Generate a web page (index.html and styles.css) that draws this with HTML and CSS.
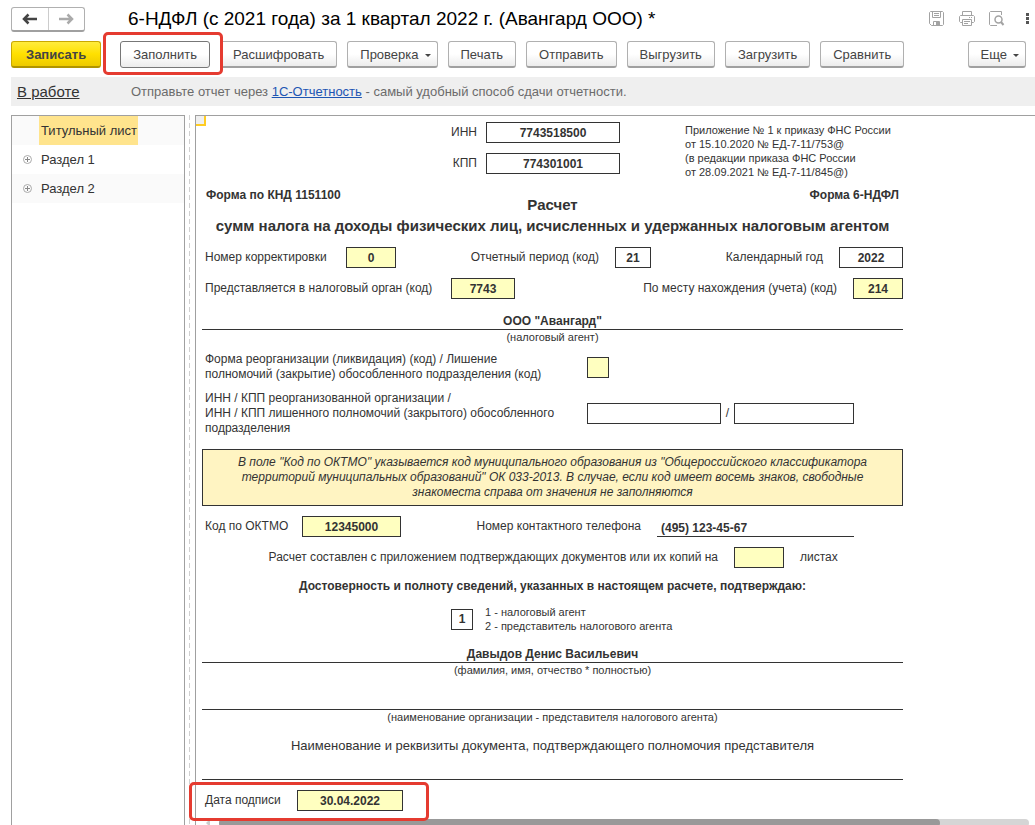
FILE: index.html
```html
<!DOCTYPE html>
<html lang="ru">
<head>
<meta charset="utf-8">
<title>6-НДФЛ</title>
<meta name="viewport" content="width=device-width, initial-scale=1">
<link rel="stylesheet" href="styles.css">
</head>
<body>
<div class="page">
  <header class="titlebar">
    <div class="history">
      <button type="button" class="history-btn" aria-label="Назад"><svg width="16" height="12" viewBox="0 0 16 12"><path d="M2 6H15M6.500 1.500L2 6L6.500 10.500" fill="none" stroke="#444" stroke-width="2.500"/></svg></button>
      <button type="button" class="history-btn" aria-label="Вперед"><svg width="16" height="12" viewBox="0 0 16 12"><path d="M1 6H14M9.500 1.500L14 6L9.500 10.500" fill="none" stroke="#aaa" stroke-width="2.500"/></svg></button>
    </div>
    <h1 class="title">6-НДФЛ (с 2021 года) за 1 квартал 2022 г. (Авангард ООО) *</h1>
    <div class="tools">
      <button type="button" class="tool" aria-label="Сохранить"><svg width="16" height="16" viewBox="0 0 16 16" fill="none" stroke="#a3a3a3"><path d="M1.500 .5H13.500L14.500 1.500V13.500L13.500 14.500H2.500L.5 12.500V1.500ZM3.500 .5V6.500H11.500V.5M5 2.500H10M5 4.500H10M4.500 14.500V10.500H10.500V14.500"/><path d="M7 11H10V14H7Z" fill="#a3a3a3" stroke="none"/></svg></button>
      <button type="button" class="tool" aria-label="Печать документа"><svg width="16" height="16" viewBox="0 0 16 16" fill="none" stroke="#a3a3a3"><path d="M3.500 4.500V.5H12.500V4.500M3.500 11.500H1.500L.5 10.500V5.500L1.500 4.500H14.500L15.500 5.500V10.500L14.500 11.500H12.500M3.500 8.500H12.500V14.500H3.500ZM5 10.500H11M5 12.500H9M10 6.500H11M12 6.500H13"/></svg></button>
      <button type="button" class="tool" aria-label="Просмотр"><svg width="16" height="16" viewBox="0 0 16 16" fill="none" stroke="#a3a3a3"><path d="M12.500 4V.5H1.500L.5 1.500V13.500L1.500 14.500H8"/><circle cx="9.500" cy="8.500" r="3.500" stroke-width="1.500"/><path d="M12 11L14.500 14" stroke-width="2"/></svg></button>
      <button type="button" class="tool tool-more" aria-label="Меню"><svg width="4" height="12" viewBox="0 0 4 12" fill="#555"><rect x="1" width="3" height="3"/><rect x="1" y="4" width="3" height="3"/><rect x="1" y="8" width="3" height="3"/></svg></button>
    </div>
  </header>

  <div class="toolbar">
    <button type="button" class="btn btn-primary">Записать</button>
    <div class="marked marked-btn"><button type="button" class="btn btn-focus">Заполнить</button></div>
    <button type="button" class="btn">Расшифровать</button>
    <button type="button" class="btn btn-menu">Проверка</button>
    <button type="button" class="btn">Печать</button>
    <button type="button" class="btn">Отправить</button>
    <button type="button" class="btn">Выгрузить</button>
    <button type="button" class="btn">Загрузить</button>
    <button type="button" class="btn">Сравнить</button>
    <button type="button" class="btn btn-menu btn-last">Еще</button>
  </div>

  <div class="status">
    <a href="#" class="state">В работе</a>
    <p class="hint">Отправьте отчет через <a href="#">1С-Отчетность</a> - самый удобный способ сдачи отчетности.</p>
  </div>

  <div class="workspace">
    <nav class="sections">
      <a href="#" class="section current"><span>Титульный лист</span></a>
      <a href="#" class="section"><svg width="9" height="9" viewBox="0 0 9 9" fill="none" stroke="#888"><circle cx="4.500" cy="4.500" r="4" stroke="#aaa"/><path d="M2 4.500H7M4.500 2V7"/></svg>Раздел 1</a>
      <a href="#" class="section"><svg width="9" height="9" viewBox="0 0 9 9" fill="none" stroke="#888"><circle cx="4.500" cy="4.500" r="4" stroke="#aaa"/><path d="M2 4.500H7M4.500 2V7"/></svg>Раздел 2</a>
    </nav>
    <div class="splitter"></div>
    <main class="sheet">
      <div class="cell-cursor"></div>
      <form class="form">
        <div class="head">
          <div class="ids">
            <label for="inn">ИНН</label><input id="inn" class="box" value="7743518500">
            <label for="kpp">КПП</label><input id="kpp" class="box" value="774301001">
          </div>
          <p class="note">Приложение № 1 к приказу ФНС России<br>от 15.10.2020 № ЕД-7-11/753@<br>(в редакции приказа ФНС России<br>от 28.09.2021 № ЕД-7-11/845@)</p>
        </div>
        <div class="codes"><span>Форма по КНД 1151100</span><span>Форма 6-НДФЛ</span></div>
        <h2 class="heading">Расчет<br>сумм налога на доходы физических лиц, исчисленных и удержанных налоговым агентом</h2>

        <div class="row row-period">
          <label for="corr">Номер корректировки</label><input id="corr" class="box fill" value="0">
          <label for="period" class="right">Отчетный период (код)</label><input id="period" class="box" value="21">
          <label for="year" class="right">Календарный год</label><input id="year" class="box" value="2022">
        </div>
        <div class="row row-office">
          <label for="office">Представляется в налоговый орган (код)</label><input id="office" class="box fill" value="7743">
          <label for="place" class="right">По месту нахождения (учета) (код)</label><input id="place" class="box fill" value="214">
        </div>

        <input id="agent" class="line" value="ООО &quot;Авангард&quot;">
        <label for="agent" class="caption">(налоговый агент)</label>

        <div class="row row-reorg">
          <label for="reorg">Форма реорганизации (ликвидация) (код) / Лишение<br>полномочий (закрытие) обособленного подразделения (код)</label><input id="reorg" class="box fill">
        </div>
        <div class="row row-former">
          <label for="finn">ИНН / КПП реорганизованной организации /<br>ИНН / КПП лишенного полномочий (закрытого) обособленного<br>подразделения</label><input id="finn" class="box"><span class="slash">/</span><input class="box" aria-label="КПП реорганизованной организации">
        </div>

        <p class="notice">В поле "Код по ОКТМО" указывается код муниципального образования из "Общероссийского классификатора территорий муниципальных образований" ОК 033-2013. В случае, если код имеет восемь знаков, свободные знакоместа справа от значения не заполняются</p>

        <div class="row row-oktmo">
          <label for="oktmo">Код по ОКТМО</label><input id="oktmo" class="box fill" value="12345000">
          <label for="phone" class="right">Номер контактного телефона</label><input id="phone" class="line phone" value="(495) 123-45-67">
        </div>
        <div class="row row-copies">
          <label for="copies" class="right">Расчет составлен с приложением подтверждающих документов или их копий на</label><input id="copies" class="box fill"><span>листах</span>
        </div>

        <p class="confirm">Достоверность и полноту сведений, указанных в настоящем расчете, подтверждаю:</p>
        <div class="signer">
          <input id="signer" class="box" value="1">
          <label for="signer" class="small">1 - налоговый агент<br>2 - представитель налогового агента</label>
        </div>

        <input id="person" class="line" value="Давыдов Денис Васильевич">
        <label for="person" class="caption">(фамилия, имя, отчество * полностью)</label>
        <input id="org" class="line org">
        <label for="org" class="caption">(наименование организации - представителя налогового агента)</label>
        <label for="proxy" class="proxy">Наименование и реквизиты документа, подтверждающего полномочия представителя</label>
        <input id="proxy" class="line">
        <div class="marked row row-date">
          <label for="date">Дата подписи</label><input id="date" class="box fill" value="30.04.2022">
        </div>
      </form>
      <div class="scroll">
        <svg width="4" height="8" viewBox="0 0 4 8"><path d="M4 0V8L0 4Z" fill="#ccc"/></svg>
        <div class="track"><div class="thumb"></div></div>
      </div>
    </main>
  </div>
</div>
</body>
</html>
```
FILE: styles.css
```css
*,
*::before,
*::after { box-sizing: border-box; }

body {
  margin: 0;
  background: #fff;
  color: #333;
  font: 13px/15px "Liberation Sans", Arial, sans-serif;
}

p, h1, h2 { margin: 0; }

button, input { font: inherit; color: inherit; }

.page {
  display: flex;
  flex-direction: column;
  height: 100vh;
  padding-left: 11px;
  overflow: hidden;
}

/* Title bar */
.titlebar {
  display: flex;
  align-items: center;
  height: 41px;
  padding: 0 6px 3px 0;
}

.history {
  display: flex;
  width: 74px;
  height: 25px;
  border: 1px solid #b0b0b0;
  border-bottom: 2px solid #a0a0a0;
  border-radius: 3px;
}

.history-btn {
  display: grid;
  flex: 1;
  place-items: center;
  padding: 0;
  border: 0;
  background: none;
}

.history-btn + .history-btn { border-left: 1px solid #ccc; }

.title {
  flex: 1;
  margin-left: 43px;
  color: #000;
  font-size: 19px;
  font-weight: 400;
  line-height: 22px;
  white-space: nowrap;
}

.tools { display: flex; gap: 14px; }

.tool {
  display: flex;
  align-items: center;
  padding: 0;
  border: 0;
  background: none;
}

.tool-more { margin-left: 6px; }

/* Command bar */
.toolbar {
  display: flex;
  gap: 10px;
  padding-right: 9px;
}

.btn {
  height: 27px;
  padding: 0 12px;
  border: 1px solid #b0b0b0;
  border-bottom: 2px solid #a0a0a0;
  border-radius: 3px;
  background: linear-gradient(#fff 50%, #ececec);
  color: #444;
  white-space: nowrap;
}

.btn-primary {
  margin-right: 9px;
  padding: 0 14px;
  border-color: #c9a800 #c9a800 #b09400;
  background: linear-gradient(#ffec3d, #ffe000 50%, #edca00);
  font-weight: 700;
}

.btn-focus { border: 1px solid #777; }

.btn-menu::after {
  display: inline-block;
  margin: 0 -6px 2px 6px;
  border: 3px solid transparent;
  border-top-color: #444;
  border-bottom: 0;
  content: "";
}

.btn-last { margin-left: auto; }

.marked { position: relative; }

.marked::after {
  position: absolute;
  z-index: 1;
  border: 3px solid #e53b30;
  border-radius: 5px;
  content: "";
  pointer-events: none;
}

.marked-btn::after { inset: -9px -13px -7px -17px; }

/* Status band */
.status {
  display: flex;
  align-items: center;
  height: 29px;
  flex-shrink: 0;
  margin: 9px 0;
  padding-left: 6px;
  background: #efefef;
}

.state {
  width: 114px;
  color: #333;
  font-size: 15px;
}

.hint { color: #6b6b6b; }
.hint a { color: #1d55b3; }

/* Work area */
.workspace {
  display: flex;
  flex: 1;
  min-height: 0;
}

.sections {
  flex: 0 0 174px;
  border: solid #a0a0a0;
  border-width: 1px 1px 0;
}

.section {
  display: flex;
  gap: 9px;
  align-items: center;
  height: 29px;
  padding-left: 11px;
  color: #333;
  text-decoration: none;
}

.section:nth-child(odd) { background: #fafafa; }

.current { padding-left: 27px; }

.current span {
  padding: 7px 1px 7px 2px;
  background: #ffe48d;
}

.splitter {
  flex: 0 0 6px;
  margin-right: 4px;
  background: repeating-linear-gradient(#d0d0d0 0 5px, #fff 5px 8px) 4px 0 / 1px 100% no-repeat;
}

.sheet {
  position: relative;
  flex: 1;
  padding: 6px;
  border: solid #a0a0a0;
  border-width: 1px 0 0 1px;
}

.cell-cursor {
  position: absolute;
  top: 0;
  left: 0;
  width: 10px;
  height: 10px;
  border: solid #fc2;
  border-width: 0 2px 2px 0;
  background: #efefef;
}

.form {
  display: flex;
  flex-direction: column;
  max-width: 701px;
  font-size: 12px;
}

.box {
  width: 100%;
  height: 21px;
  padding: 0;
  border: 1px solid #333;
  border-radius: 0;
  background: #fff;
  font-weight: 700;
  text-align: center;
}

.fill { background: #ffffc0; }

.line {
  height: 17px;
  padding: 0;
  border: 0;
  border-bottom: 1px solid #333;
  background: none;
  font-weight: 700;
  text-align: center;
}

.caption,
.small,
.note { font-size: 11px; }

.small,
.note { line-height: 14px; }

.caption { text-align: center; }

.head {
  display: grid;
  grid-template-columns: 418px 1fr;
  column-gap: 65px;
}

.ids {
  display: grid;
  grid-template-columns: 1fr 134px;
  gap: 10px 9px;
  align-content: start;
  align-items: center;
  text-align: right;
}

.note { padding-top: 1px; }

.codes {
  display: flex;
  justify-content: space-between;
  padding: 9px 4px 0;
  font-weight: 700;
}

.heading {
  margin-top: -9px;
  font-size: 15px;
  line-height: 21px;
  text-align: center;
}

.row {
  display: grid;
  align-items: center;
  padding-left: 3px;
}

.right { text-align: right; }

.row-period {
  grid-template-columns: 141px 50px 1fr 36px 188px 64px;
  margin-top: 11px;
}

.row-period .right,
.row-office .right { padding-right: 16px; }

.row-office {
  grid-template-columns: 246px 64px 1fr 50px;
  margin: 10px 0 14px;
}

.row-reorg {
  grid-template-columns: 382px 22px;
  margin: 7px 0 9px;
}

.row-former { grid-template-columns: 382px 134px 13px 120px; }

.slash { text-align: center; }

.notice {
  margin: 13px 0 10px;
  padding: 5px 16px;
  border: 1px solid #333;
  background: #fff4c2;
  font-style: italic;
  text-align: center;
}

.row-oktmo { grid-template-columns: 97px 99px 1fr 197px; padding-right: 49px; }
.row-oktmo .right { padding-right: 16px; }

.phone {
  height: 21px;
  padding: 4px 4px 0;
  text-align: left;
}

.row-copies {
  grid-template-columns: 529px 50px 1fr;
  margin: 10px 0 11px;
}

.row-copies .right,
.row-copies span { padding: 0 16px; }

.confirm {
  font-weight: 700;
  text-align: center;
}

.signer {
  display: grid;
  grid-template-columns: 22px 1fr;
  gap: 12px;
  align-items: center;
  margin: 11px 0 13px;
  padding-left: 249px;
}

.org { margin-top: 15px; }

.proxy {
  margin: 13px 0 10px;
  font-size: 13px;
  text-align: center;
}

.row-date {
  grid-template-columns: 92px 106px;
  margin-top: 10px;
}

.row-date::after {
  inset: -8px auto -10px -13px;
  width: 240px;
}

.scroll {
  display: flex;
  gap: 9px;
  margin: 8px 0 0 4px;
}

.track {
  flex: 1;
  border-radius: 4px;
  background: #d5d5d5;
}

.thumb {
  width: 89%;
  height: 8px;
  border-radius: 4px;
  background: #999;
}
```
